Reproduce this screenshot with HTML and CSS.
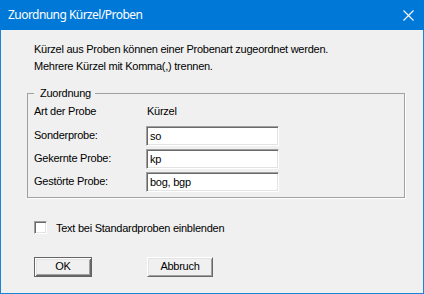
FILE: index.html
```html
<!DOCTYPE html>
<html lang="de">
<head>
<meta charset="utf-8">
<title>Zuordnung Kürzel/Proben</title>
<link rel="stylesheet" href="styles.css">
</head>
<body>
<div class="window">
  <div class="titlebar">
    <span class="title">Zuordnung Kürzel/Proben</span>
    <svg class="close" width="11" height="11" viewBox="0 0 11 11"><path d="M0.5 0.5 L10.5 10.5 M10.5 0.5 L0.5 10.5" stroke="#fff" stroke-width="1.1" fill="none"/></svg>
  </div>
  <div class="client">
    <div class="intro">
      <span>Kürzel aus Proben können einer Probenart zugeordnet werden.</span>
      <span>Mehrere Kürzel mit Komma(,) trennen.</span>
    </div>
    <fieldset class="group">
      <legend class="legend">Zuordnung</legend>
      <div class="grid">
        <span class="head">Art der Probe</span>
        <span class="head col2">Kürzel</span>
        <span class="label">Sonderprobe:</span>
        <div class="edit">so</div>
        <span class="label">Gekernte Probe:</span>
        <div class="edit">kp</div>
        <span class="label">Gestörte Probe:</span>
        <div class="edit">bog, bgp</div>
      </div>
    </fieldset>
    <div class="check-row">
      <span class="checkbox"></span>
      <span class="check-label">Text bei Standardproben einblenden</span>
    </div>
    <div class="buttons">
      <div class="btn default"><div class="btn-inner">OK</div></div>
      <div class="btn cancel"><div class="btn-inner">Abbruch</div></div>
    </div>
  </div>
</div>
</body>
</html>
```

FILE: styles.css
```css
html, body {
  margin: 0;
  padding: 0;
  background: #f0f0f0;
}
.window {
  width: 424px;
  height: 294px;
  display: flex;
  flex-direction: column;
  font-family: "Liberation Sans", Arial, sans-serif;
  font-size: 11px;
  line-height: 13px;
  letter-spacing: -0.25px;
  color: #000;
}
.titlebar {
  height: 30px;
  flex: none;
  background: #0078d7;
  display: flex;
  align-items: center;
  justify-content: space-between;
  padding: 0 10px 0 8px;
  box-sizing: border-box;
}
.title {
  font-family: "Noto Sans", "Open Sans", sans-serif;
  font-size: 12px;
  letter-spacing: -0.55px;
  line-height: 16px;
  color: #fff;
  margin-top: -1px;
}
.close {
  display: block;
}
.client {
  flex: 1;
  border: 1px solid #1883d7;
  border-top: none;
  box-sizing: border-box;
  padding: 0 0 0 33px;
  background: #f0f0f0;
}
.intro {
  margin: 13px 0 0 0;
  display: flex;
  flex-direction: column;
  gap: 4px;
}
.group {
  margin: 14px 0 0 -7px;
  width: 378px;
  box-sizing: border-box;
  border: 1px solid #a0a0a0;
  box-shadow: 1px 1px 0 #fff;
  padding: 5px 0 5px 6px;
  min-width: 0;
}
.legend {
  padding: 0 4px 0 6px;
  margin: 0;
  line-height: 13px;
}
.grid {
  display: grid;
  grid-template-columns: 112px 133px;
  grid-template-rows: 18px;
  grid-auto-rows: 20px;
  row-gap: 3px;
  align-items: center;
}
.head {
  line-height: 13px;
  align-self: start;
}
.col2 {
  padding-left: 1px;
}
.label {
  margin-top: -1px;
}
.edit {
  height: 20px;
  box-sizing: border-box;
  background: #fff;
  border-top: 1px solid #a0a0a0;
  border-left: 1px solid #a0a0a0;
  border-right: 1px solid #fff;
  border-bottom: 1px solid #fff;
  box-shadow: inset 1px 1px 0 #696969, inset -1px -1px 0 #e3e3e3;
  padding: 3px 0 0 3px;
  line-height: 13px;
}
.check-row {
  display: flex;
  align-items: center;
  margin-top: 23px;
  height: 13px;
}
.checkbox {
  width: 13px;
  height: 13px;
  box-sizing: border-box;
  background: #fff;
  border-top: 1px solid #a0a0a0;
  border-left: 1px solid #a0a0a0;
  border-right: 1px solid #fff;
  border-bottom: 1px solid #fff;
  box-shadow: inset 1px 1px 0 #696969, inset -1px -1px 0 #e3e3e3;
  margin-right: 9px;
}
.check-label {
  margin-top: 1px;
}
.buttons {
  display: flex;
  margin-top: 23px;
  gap: 55px;
}
.btn {
  height: 20px;
  box-sizing: border-box;
  border-top: 1px solid #fff;
  border-left: 1px solid #fff;
  border-right: 1px solid #696969;
  border-bottom: 1px solid #696969;
  box-shadow: inset 1px 1px 0 #e3e3e3, inset -1px -1px 0 #a0a0a0;
  display: flex;
  align-items: center;
  justify-content: center;
}
.btn.default {
  width: 58px;
  border: 1px solid #646464;
  box-shadow: inset 1px 1px 0 #fff, inset -1px -1px 0 #696969, inset 2px 2px 0 #e3e3e3, inset -2px -2px 0 #a0a0a0;
}
.btn.cancel {
  width: 66px;
}
.btn-inner {
  line-height: 13px;
  margin-top: -1px;
}
```
